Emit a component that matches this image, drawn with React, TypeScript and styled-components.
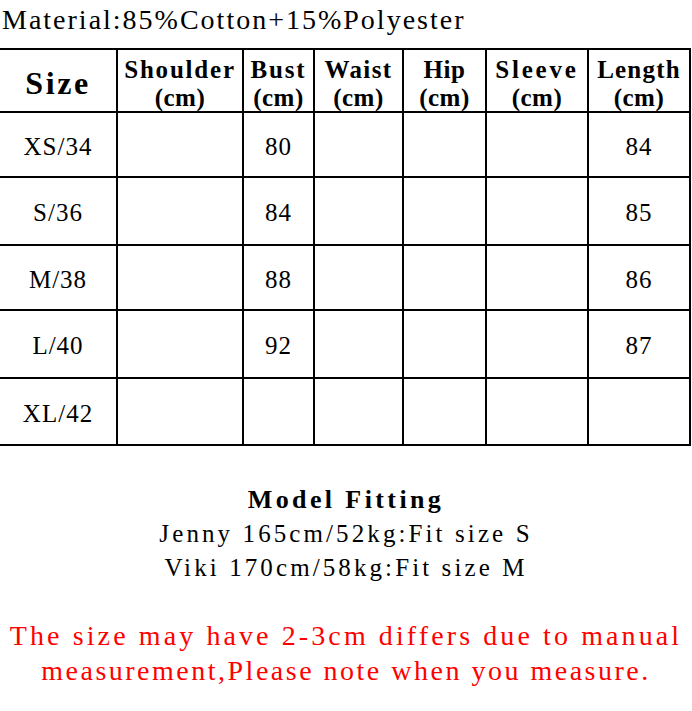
import React from "react";
import styled, { createGlobalStyle } from "styled-components";

const GlobalStyle = createGlobalStyle`
  html, body {
    margin: 0;
    padding: 0;
    background: #ffffff;
  }
  body {
    font-family: "Liberation Serif", "Times New Roman", serif;
    color: #000000;
  }
`;

const Page = styled.div`
  width: 692px;
  height: 711px;
  overflow: hidden;
  background: #ffffff;
`;

const Title = styled.div`
  height: 39px;
  line-height: 39px;
  padding-left: 2px;
  font-size: 28px;
  letter-spacing: 2px;
  white-space: nowrap;
`;

const Table = styled.div`
  margin-top: 9px;
  display: grid;
  grid-template-columns: 118px 126px 71px 89px 83px 102px 102px;
  grid-template-rows: 63px 65px 68px 65px 68px 67px;
  border-top: 2px solid #000000;
  width: 691px;
`;

const CellBase = styled.div`
  box-sizing: border-box;
  border-right: 2px solid #000000;
  border-bottom: 2px solid #000000;
  display: flex;
  flex-direction: column;
  align-items: center;
  justify-content: center;
  text-align: center;
  white-space: nowrap;
`;

const SizeHead = styled(CellBase)`
  padding-top: 4px;
  font-weight: bold;
  font-size: 32px;
  letter-spacing: 2.6px;
  line-height: 34px;
`;

const HeadCell = styled(CellBase)`
  padding-top: 6px;
  font-weight: bold;
  font-size: 25px;
  line-height: 28px;
`;

const HeadLine = styled.span<{ $ls: number }>`
  letter-spacing: ${(p) => p.$ls}px;
`;

const DataCell = styled(CellBase)`
  padding-top: 4px;
  font-size: 25px;
  letter-spacing: 1px;
  line-height: 28px;
`;

const Footer = styled.div`
  margin-top: 37px;
  display: flex;
  flex-direction: column;
  align-items: center;
`;

const ModelTitle = styled.div`
  font-weight: bold;
  font-size: 26px;
  letter-spacing: 3.4px;
  line-height: 34px;
  white-space: nowrap;
`;

const ModelLine = styled.div`
  font-size: 25px;
  letter-spacing: 3.1px;
  line-height: 34px;
  white-space: nowrap;
`;

const Note = styled.div`
  margin-top: 33px;
  display: flex;
  flex-direction: column;
  align-items: center;
  color: #ff0000;
  font-size: 28px;
  line-height: 35px;
  white-space: nowrap;
`;

const NoteLine = styled.span<{ $ls: number }>`
  letter-spacing: ${(p) => p.$ls}px;
`;

const headers: { name: string; ls: number }[] = [
  { name: "Shoulder", ls: 1.8 },
  { name: "Bust", ls: 1.8 },
  { name: "Waist", ls: 1.4 },
  { name: "Hip", ls: 0.5 },
  { name: "Sleeve", ls: 2.8 },
  { name: "Length", ls: 1.2 },
];

const rows: string[][] = [
  ["XS/34", "", "80", "", "", "", "84"],
  ["S/36", "", "84", "", "", "", "85"],
  ["M/38", "", "88", "", "", "", "86"],
  ["L/40", "", "92", "", "", "", "87"],
  ["XL/42", "", "", "", "", "", ""],
];

export default function App() {
  return (
    <Page>
      <GlobalStyle />
      <Title>Material:85%Cotton+15%Polyester</Title>
      <Table>
        <SizeHead>Size</SizeHead>
        {headers.map((h) => (
          <HeadCell key={h.name}>
            <HeadLine $ls={h.ls}>{h.name}</HeadLine>
            <HeadLine $ls={0.5}>(cm)</HeadLine>
          </HeadCell>
        ))}
        {rows.map((r, i) =>
          r.map((v, j) => <DataCell key={`${i}-${j}`}>{v}</DataCell>)
        )}
      </Table>
      <Footer>
        <ModelTitle>Model Fitting</ModelTitle>
        <ModelLine>Jenny 165cm/52kg:Fit size S</ModelLine>
        <ModelLine>Viki 170cm/58kg:Fit size M</ModelLine>
      </Footer>
      <Note>
        <NoteLine $ls={3.1}>The size may have 2-3cm differs due to manual</NoteLine>
        <NoteLine $ls={2.5}>measurement,Please note when you measure.</NoteLine>
      </Note>
    </Page>
  );
}
